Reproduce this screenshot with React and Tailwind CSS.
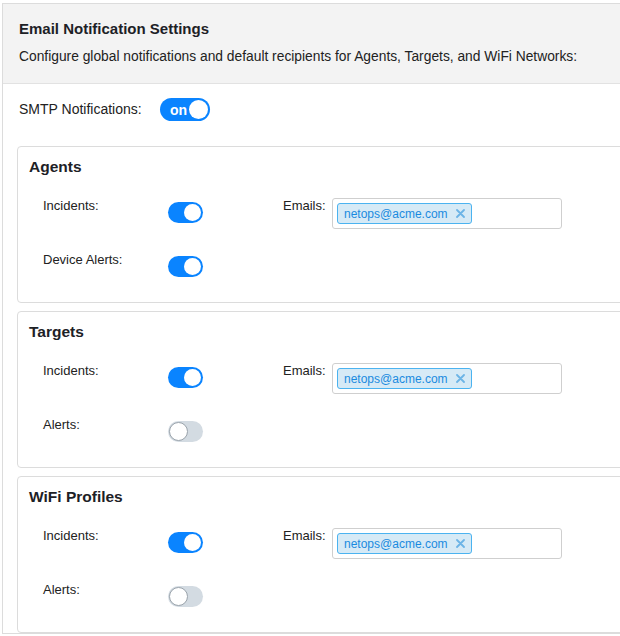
import React from "react";

function Toggle({ on }) {
  return on ? (
    <div className="w-[35px] h-[21px] rounded-full bg-[#0a84ff] flex items-center justify-end px-[2px]">
      <div className="w-[17px] h-[17px] rounded-full bg-white" />
    </div>
  ) : (
    <div className="w-[35px] h-[21px] rounded-full bg-[#d3dbe2] flex items-center justify-start px-[1px]">
      <div className="w-[19px] h-[19px] rounded-full bg-white border border-[#9aa3ab]" />
    </div>
  );
}

function EmailBox() {
  return (
    <div className="w-[230px] h-[31px] border border-[#cfcfcf] rounded-[3px] bg-white flex items-center px-[4px]">
      <div className="h-[21px] flex items-center gap-[8px] pl-[6px] pr-[6px] rounded-[3px] border border-[#4bb3f0] bg-[#d6eaf6] text-[12px] text-[#1a8ae0]">
        <span>netops@acme.com</span>
        <svg width="9" height="9" viewBox="0 0 9 9" className="block">
          <path d="M1 1L8 8M8 1L1 8" stroke="#6cb4e6" strokeWidth="1.8" strokeLinecap="round" />
        </svg>
      </div>
    </div>
  );
}

function Card({ title, rows }) {
  return (
    <div className="w-[640px] border border-[#dcdcdc] rounded-[4px] pt-[8px] pl-[11px] pb-[19px]">
      <div className="text-[15.5px] leading-6 font-bold text-[#1d2126]">{title}</div>
      <div className="mt-[19px] pl-[14px] flex flex-col gap-[23px]">
        {rows.map((r, i) => (
          <div key={i} className="flex h-[31px]">
            <div className="w-[125px] text-[13px] leading-4 text-[#222]">{r.label}</div>
            <div className="w-[115px] pt-[4px]">
              <Toggle on={r.on} />
            </div>
            {r.emails && (
              <>
                <div className="w-[49px] text-[13px] leading-4 text-[#222]">Emails:</div>
                <EmailBox />
              </>
            )}
          </div>
        ))}
      </div>
    </div>
  );
}

export default function App() {
  return (
    <div
      className="bg-white min-h-[636px] pt-[3px] pl-[2px] overflow-hidden"
      style={{ fontFamily: "'Liberation Sans', Arial, sans-serif" }}
    >
      <div className="w-[680px] border border-[#dcdcdc]">
        <div className="bg-[#f3f3f3] border-b border-[#e2e2e2] pt-[13px] pb-[16px] pl-[16px]">
          <div className="text-[15px] leading-6 font-bold text-[#1d2126]">Email Notification Settings</div>
          <div className="mt-[6px] text-[13.8px] leading-5 text-[#222]">
            Configure global notifications and default recipients for Agents, Targets, and WiFi Networks:
          </div>
        </div>
        <div className="pl-[14px] pt-[14px]">
          <div className="flex items-center h-[23px] pl-[2px]">
            <div className="w-[141px] text-[14px] text-[#222]">SMTP Notifications:</div>
            <div className="w-[50px] h-[23px] rounded-full bg-[#0a84ff] flex items-center justify-between pl-[10px] pr-[2px]">
              <span className="text-white text-[14px] font-bold leading-none">on</span>
              <div className="w-[19px] h-[19px] rounded-full bg-white" />
            </div>
          </div>
          <div className="mt-[25px] flex flex-col gap-[8px]">
            <Card
              title="Agents"
              rows={[
                { label: "Incidents:", on: true, emails: true },
                { label: "Device Alerts:", on: true },
              ]}
            />
            <Card
              title="Targets"
              rows={[
                { label: "Incidents:", on: true, emails: true },
                { label: "Alerts:", on: false },
              ]}
            />
            <Card
              title="WiFi Profiles"
              rows={[
                { label: "Incidents:", on: true, emails: true },
                { label: "Alerts:", on: false },
              ]}
            />
          </div>
        </div>
      </div>
    </div>
  );
}
